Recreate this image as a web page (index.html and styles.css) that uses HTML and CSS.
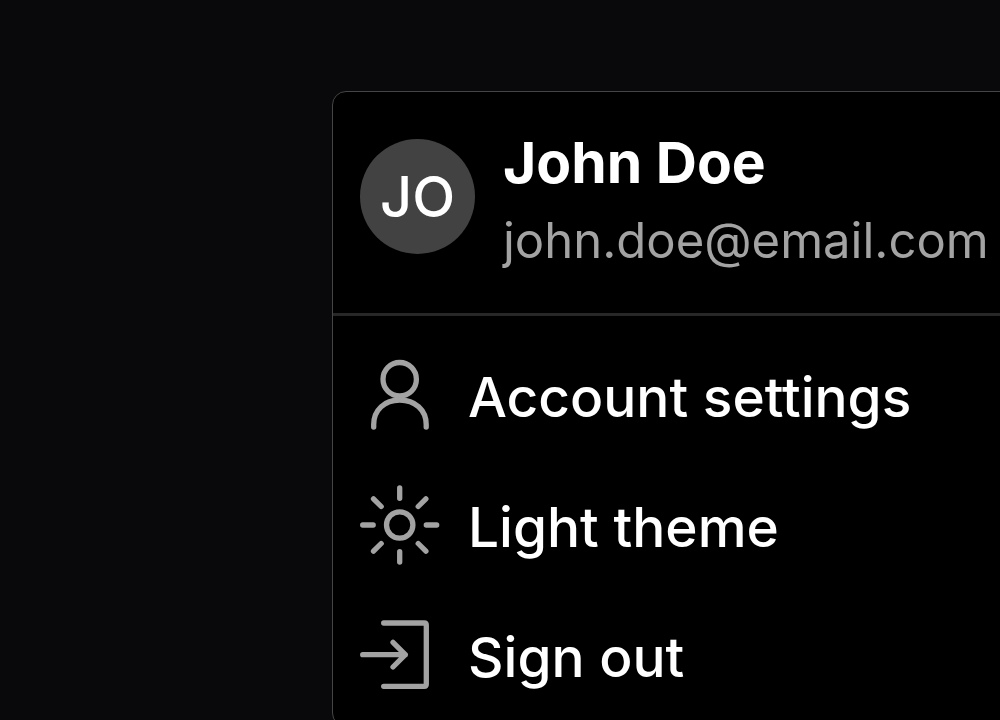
FILE: index.html
```
<!DOCTYPE html>
<html lang="en">
<head>
    <meta charset="UTF-8">
    <title>User Menu</title>
    <link rel="stylesheet" href="styles.css">
</head>
<body>
    <div class="menu">
        <div class="profile">
            <div class="avatar">JO</div>
            <div class="details">
                <div class="name">John Doe</div>
                <div class="email">john.doe@email.com</div>
            </div>
        </div>

        <nav class="actions">
            <button type="button" class="action">
                <svg class="icon" viewBox="0 0 80 80" aria-hidden="true">
                    <circle cx="39.7" cy="24.2" r="16.7"/>
                    <path d="M13.7 72V69.5C13.7 55 24.5 45 39.7 45S66.2 55 66.2 69.5V72"/>
                </svg>
                <span class="label">Account settings</span>
            </button>
            <button type="button" class="action">
                <svg class="icon" viewBox="0 0 80 80" aria-hidden="true">
                    <circle cx="39.7" cy="40" r="13.2"/>
                    <path d="M39.7 3V13.3M39.7 66.7V77M2.7 40H13.2M66.3 40H76.7M13.5 13.8L21.2 21.5M58.2 21.5L65.9 13.8M13.5 66.2L21.2 58.5M58.2 58.5L65.9 66.2"/>
                </svg>
                <span class="label">Light theme</span>
            </button>
            <button type="button" class="action">
                <svg class="icon" viewBox="0 0 80 80" aria-hidden="true">
                    <path d="M23.7 8H64.2Q66.3 8 66.3 10.1V69.2Q66.3 71.3 64.2 71.3H23.7"/>
                    <path d="M2.7 39.7H45.3M33 27.4L45.3 39.7L33 52"/>
                </svg>
                <span class="label">Sign out</span>
            </button>
        </nav>
    </div>
</body>
</html>
```
FILE: styles.css
```
body {
    font-family: Inter, "Liberation Sans", sans-serif;
    background-color: #09090b;
    color: white;
    margin: 0;
    padding: 91px 0 0 332px;
    height: 100vh;
    box-sizing: border-box;
    overflow: hidden;
}
.menu {
    width: max-content;
    background-color: black;
    border: 1px solid #454545;
    border-radius: 14px;
}
.profile {
    display: flex;
    gap: 28px;
    padding: 32px 28px 33px 27px;
    border-bottom: 3px solid #272727;
}
.avatar {
    display: flex;
    align-items: center;
    justify-content: center;
    flex-shrink: 0;
    width: 115px;
    height: 115px;
    margin-top: 15px;
    border-radius: 50%;
    background-color: #424242;
    font-size: 56px;
    font-weight: 500;
    line-height: 1;
}
.details {
    line-height: 78px;
}
.name {
    font-size: 57px;
    font-weight: 700;
}
.email {
    font-size: 49px;
    color: #a3a3a3;
}
.actions {
    display: flex;
    flex-direction: column;
    padding: 14px 0 6px;
}
.action {
    display: flex;
    align-items: center;
    gap: 28px;
    height: 130px;
    padding: 0 28px 0 27px;
    background: none;
    border: none;
    color: white;
    font-family: inherit;
    font-size: 55px;
    font-weight: 500;
    text-align: left;
    cursor: pointer;
}
.label {
    padding-top: 3px;
}
.icon {
    width: 80px;
    height: 80px;
    fill: none;
    stroke: #a3a3a3;
    stroke-width: 5.3;
    stroke-linecap: round;
    stroke-linejoin: round;
}
```
